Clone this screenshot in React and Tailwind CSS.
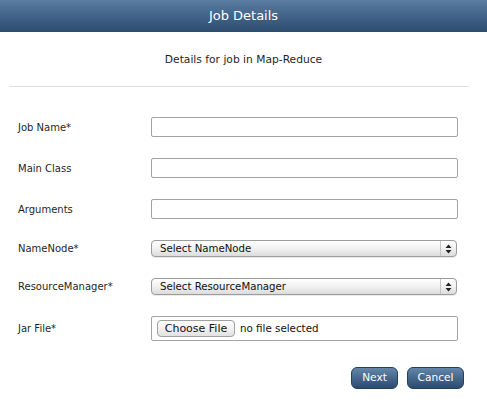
const font = { fontFamily: '"DejaVu Sans", "Liberation Sans", sans-serif' };

function TextRow({ label }) {
  return (
    <div className="flex items-center h-[20px]">
      <div className="w-[151px] pl-[18px] text-[10px] text-[#1f1f1f]">{label}</div>
      <input
        type="text"
        className="w-[307px] h-[20px] border border-[#a3a3a3] rounded-[2px] bg-white outline-none"
      />
    </div>
  );
}

function SelectRow({ label, placeholder }) {
  return (
    <div className="flex items-center h-[17px]">
      <div className="w-[151px] pl-[18px] text-[10px] text-[#1f1f1f]">{label}</div>
      <div className="w-[306px] h-[17px] flex items-stretch border border-[#9c9c9c] rounded-[4px] bg-gradient-to-b from-[#ffffff] via-[#f1f1f1] to-[#dcdcdc] shadow-[0_1px_0_rgba(0,0,0,0.08)]">
        <div className="flex-1 pl-[8px] text-[10.2px] leading-[15px] text-[#111]">{placeholder}</div>
        <div className="w-[16px] border-l border-[#c4c4c4] flex items-center justify-center">
          <svg width="7" height="10" viewBox="0 0 7 10">
            <path d="M3.5 0.5 L6.5 4 L0.5 4 Z" fill="#222" />
            <path d="M3.5 9.5 L6.5 6 L0.5 6 Z" fill="#222" />
          </svg>
        </div>
      </div>
    </div>
  );
}

export default function App() {
  return (
    <div className="w-[487px] h-[416px] bg-white overflow-hidden" style={font}>
      <div className="h-[32px] flex items-center justify-center bg-gradient-to-b from-[#5a7da2] to-[#2c4b6f] text-white text-[13px]">
        Job Details
      </div>

      <div className="mt-[20px] h-[16px] leading-[16px] text-center text-[10.7px] text-[#1f1f1f]">
        Details for job in Map-Reduce
      </div>

      <div className="mt-[18px] ml-[9px] w-[460px] h-px bg-[#dedede]" />

      <div className="mt-[30px] flex flex-col gap-[21px]">
        <TextRow label="Job Name*" />
        <TextRow label="Main Class" />
        <TextRow label="Arguments" />
        <SelectRow label="NameNode*" placeholder="Select NameNode" />
        <SelectRow label="ResourceManager*" placeholder="Select ResourceManager" />

        <div className="flex items-center h-[25px]">
          <div className="w-[151px] pl-[18px] text-[10px] text-[#1f1f1f]">Jar File*</div>
          <div className="w-[307px] h-[25px] flex items-center border border-[#a3a3a3] rounded-[2px] bg-white pl-[5px]">
            <button className="w-[78px] h-[17px] text-[11px] leading-[15px] text-[#111] border border-[#a0a0a0] rounded-[4px] bg-gradient-to-b from-[#ffffff] to-[#e2e2e2]">
              Choose File
            </button>
            <span className="ml-[5px] text-[10.3px] text-[#111]">no file selected</span>
          </div>
        </div>

        <div className="mt-[5px] flex justify-end gap-[9px] pr-[23px]">
          <button className="w-[47px] h-[22px] rounded-[6px] border border-[#23405f] bg-gradient-to-b from-[#6386ab] to-[#2b4a6f] text-white text-[10.6px]">
            Next
          </button>
          <button className="w-[57px] h-[22px] rounded-[6px] border border-[#23405f] bg-gradient-to-b from-[#6386ab] to-[#2b4a6f] text-white text-[10.6px]">
            Cancel
          </button>
        </div>
      </div>
    </div>
  );
}
